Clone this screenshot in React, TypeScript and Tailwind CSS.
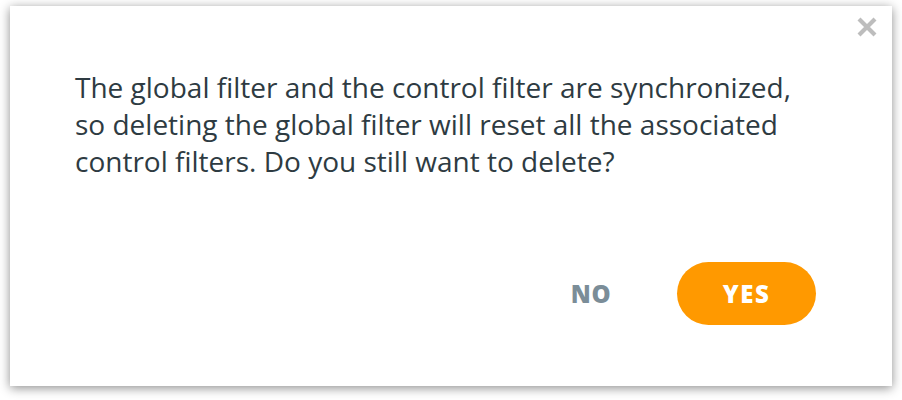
import React from "react";

export default function App() {
  return (
    <div className="w-[902px] h-[400px] bg-white pt-[6px] pl-[10px]" style={{ fontFamily: '"Open Sans", "Liberation Sans", sans-serif' }}>
      <div className="relative w-[882px] h-[380px] bg-white shadow-[0_2px_10px_rgba(0,0,0,0.45)] flex flex-col">
        <button className="absolute right-[14px] top-[10px] w-[22px] h-[22px] flex items-center justify-center">
          <svg width="22" height="22" viewBox="0 0 22 22">
            <path d="M3 3 L19 19 M19 3 L3 19" stroke="#bdbdbd" strokeWidth="4.2" strokeLinecap="butt" />
          </svg>
        </button>
        <p className="pl-[65px] pr-[20px] pt-[63px] text-[28px] leading-[37px] text-[#2e3b42] whitespace-nowrap">
          The global filter and the control filter are synchronized,
          <br />
          so deleting the global filter will reset all the associated
          <br />
          control filters. Do you still want to delete?
        </p>
        <div className="mt-auto mb-[61px] mr-[76px] flex items-center justify-end gap-[66px]">
          <button className="text-[24px] font-extrabold text-[#7b8d98] tracking-[0.5px]">NO</button>
          <button className="w-[139px] h-[63px] rounded-full bg-[#ff9900] text-white text-[24px] font-extrabold tracking-[1.5px]">YES</button>
        </div>
      </div>
    </div>
  );
}
